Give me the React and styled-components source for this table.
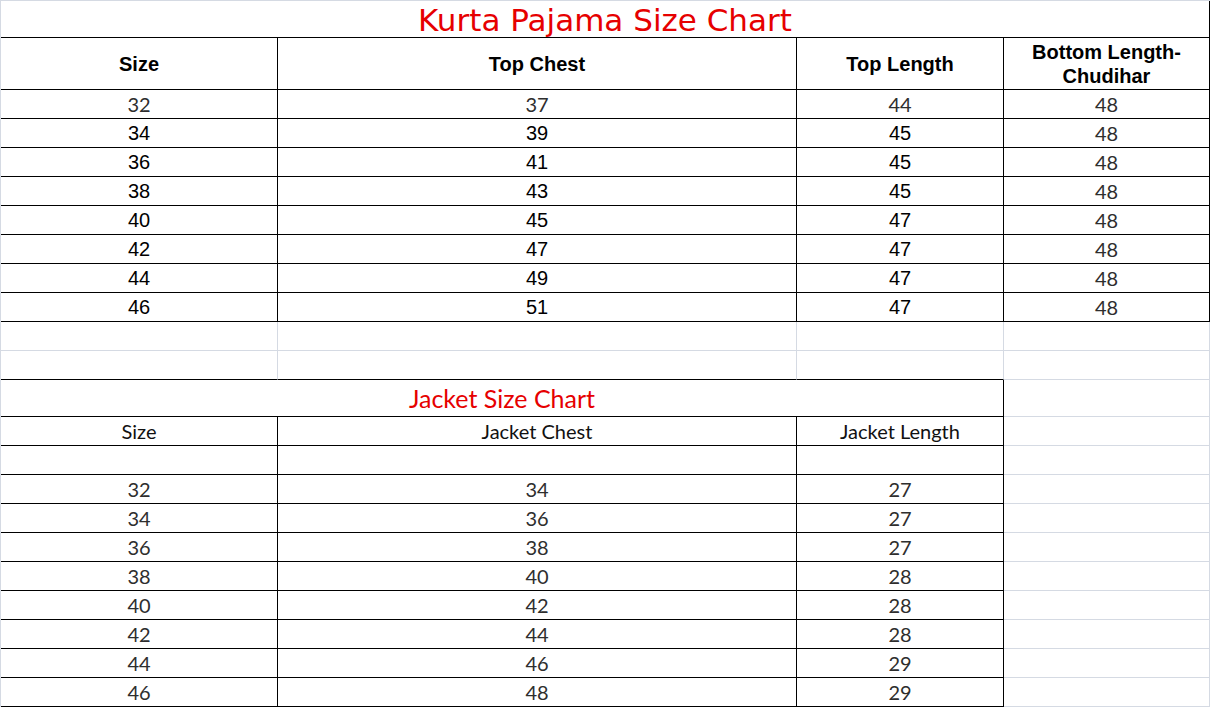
import React from 'react';
import styled, { createGlobalStyle, css } from 'styled-components';

const GRID = '#d5dae3';
const INK = '#000';

const GlobalStyle = createGlobalStyle`
  html, body {
    margin: 0;
    padding: 0;
    background: #fff;
  }
`;

const Sheet = styled.div`
  display: grid;
  grid-template-columns: 277px 519px 207px 206px;
  grid-template-rows: 37px 52px repeat(10, 29px) 37px repeat(10, 29px);
  width: 1210px;
  height: 707px;
  box-sizing: border-box;
  border-left: 1px solid ${GRID};
  border-top: 1px solid ${GRID};
  overflow: hidden;
`;

const fonts = {
  arial: css`
    font-family: 'Liberation Sans', Arial, sans-serif;
    font-size: 20px;
    color: #000;
  `,
  bold: css`
    font-family: 'Liberation Sans', Arial, sans-serif;
    font-size: 20px;
    font-weight: 700;
    line-height: 24px;
    color: #000;
  `,
  calibri: css`
    font-family: Lato, 'Open Sans', sans-serif;
    font-size: 20px;
    color: #2e2e2e;
  `,
  label: css`
    font-family: Lato, 'Open Sans', sans-serif;
    font-size: 20px;
    color: #111;
  `,
};

const Cell = styled.div`
  box-sizing: border-box;
  display: flex;
  align-items: center;
  justify-content: center;
  text-align: center;
  grid-column: span ${(p) => p.$span || 1};
  border-right: 1px solid ${(p) => (p.$right === 'grid' ? GRID : INK)};
  border-bottom: 1px solid ${(p) => (p.$bottom === 'grid' ? GRID : INK)};
  ${(p) => fonts[p.$font || 'calibri']}
`;

const SheetTitle = styled(Cell)`
  font-family: 'DejaVu Sans', Verdana, sans-serif;
  font-size: 31px;
  color: #e60000;
  padding-top: 1px;
`;

const JacketTitle = styled(Cell)`
  font-family: Lato, 'Open Sans', sans-serif;
  font-size: 25px;
  color: #e60000;
`;

const kurta = [
  [32, 37, 44, 48],
  [34, 39, 45, 48],
  [36, 41, 45, 48],
  [38, 43, 45, 48],
  [40, 45, 47, 48],
  [42, 47, 47, 48],
  [44, 49, 47, 48],
  [46, 51, 47, 48],
];

const jacket = [
  [32, 34, 27],
  [34, 36, 27],
  [36, 38, 27],
  [38, 40, 28],
  [40, 42, 28],
  [42, 44, 28],
  [44, 46, 29],
  [46, 48, 29],
];

const Spare = ({ bottom = 'grid' }) => <Cell $right="grid" $bottom={bottom} />;

export default function App() {
  return (
    <>
      <GlobalStyle />
      <Sheet>
        <SheetTitle $span={4}>Kurta Pajama Size Chart</SheetTitle>

        <Cell $font="bold">Size</Cell>
        <Cell $font="bold">Top Chest</Cell>
        <Cell $font="bold">Top Length</Cell>
        <Cell $font="bold">
          Bottom Length-
          <br />
          Chudihar
        </Cell>

        {kurta.map((row, i) =>
          row.map((v, j) => (
            <Cell key={`k${i}-${j}`} $font={i === 0 || j === 3 ? 'calibri' : 'arial'}>
              {v}
            </Cell>
          ))
        )}

        <Cell $right="grid" $bottom="grid" />
        <Cell $right="grid" $bottom="grid" />
        <Cell $right="grid" $bottom="grid" />
        <Spare />
        <Cell $right="grid" />
        <Cell $right="grid" />
        <Cell $right="grid" />
        <Spare />

        <JacketTitle $span={3}>Jacket Size Chart</JacketTitle>
        <Spare />

        <Cell $font="label">Size</Cell>
        <Cell $font="label">Jacket Chest</Cell>
        <Cell $font="label">Jacket Length</Cell>
        <Spare />

        <Cell />
        <Cell />
        <Cell />
        <Spare />

        {jacket.map((row, i) => (
          <React.Fragment key={`j${i}`}>
            {row.map((v, j) => (
              <Cell key={j}>{v}</Cell>
            ))}
            <Spare />
          </React.Fragment>
        ))}
      </Sheet>
    </>
  );
}
